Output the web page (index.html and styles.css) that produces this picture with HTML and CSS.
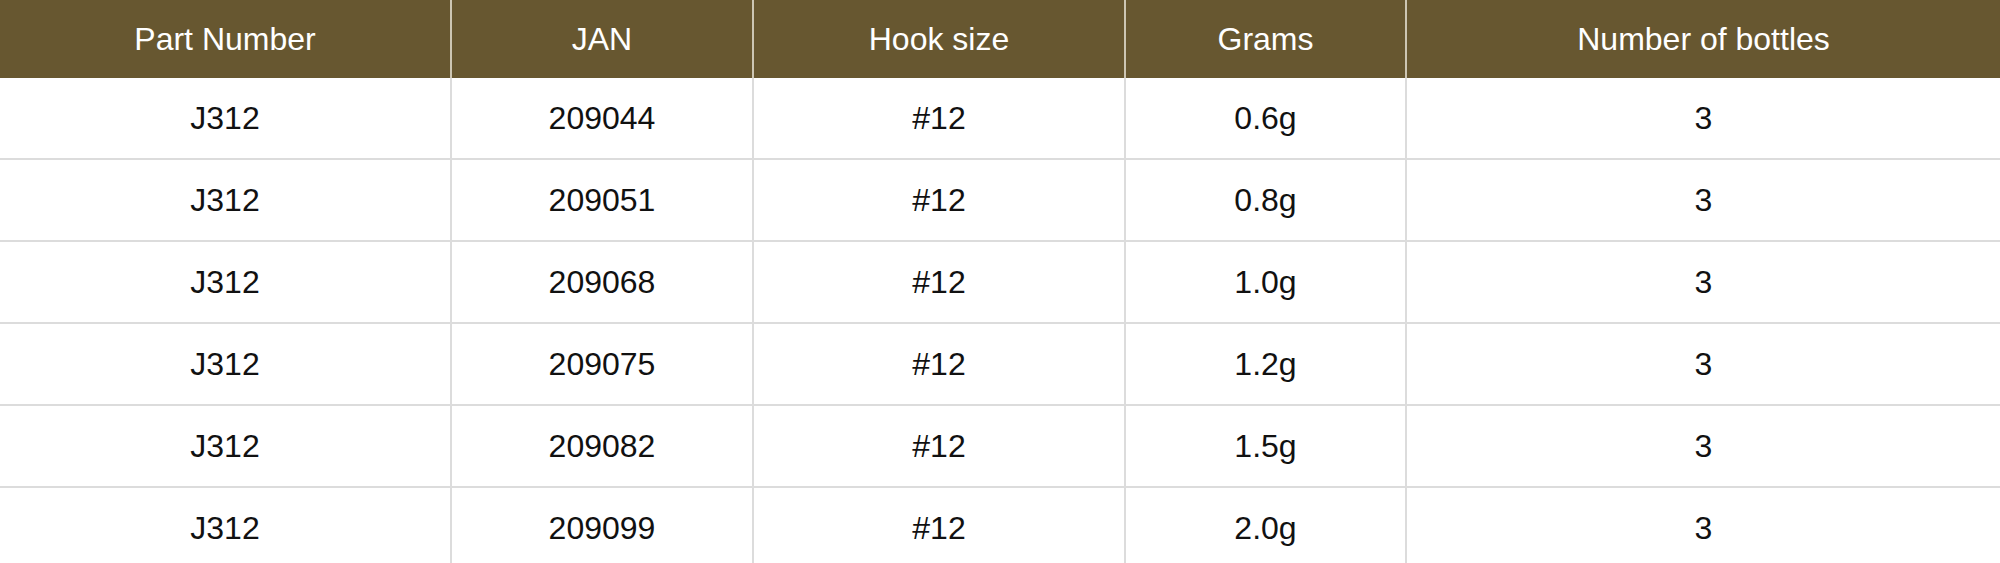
FILE: index.html
```html
<!DOCTYPE html>
<html>
<head>
<meta charset="utf-8">
<link rel="stylesheet" href="styles.css">
</head>
<body>
<table class="spec">
  <colgroup>
    <col class="c1"><col class="c2"><col class="c3"><col class="c4"><col class="c5">
  </colgroup>
  <thead>
    <tr><th>Part Number</th><th>JAN</th><th>Hook size</th><th>Grams</th><th>Number of bottles</th></tr>
  </thead>
  <tbody>
    <tr><td>J312</td><td>209044</td><td>#12</td><td>0.6g</td><td>3</td></tr>
    <tr><td>J312</td><td>209051</td><td>#12</td><td>0.8g</td><td>3</td></tr>
    <tr><td>J312</td><td>209068</td><td>#12</td><td>1.0g</td><td>3</td></tr>
    <tr><td>J312</td><td>209075</td><td>#12</td><td>1.2g</td><td>3</td></tr>
    <tr><td>J312</td><td>209082</td><td>#12</td><td>1.5g</td><td>3</td></tr>
    <tr><td>J312</td><td>209099</td><td>#12</td><td>2.0g</td><td>3</td></tr>
  </tbody>
</table>
</body>
</html>
```

FILE: styles.css
```css
html, body {
  margin: 0;
  padding: 0;
  background: #ffffff;
  overflow: hidden;
}
.spec {
  width: 2000px;
  border-collapse: collapse;
  table-layout: fixed;
  font-family: "Liberation Sans", Arial, sans-serif;
  font-size: 32px;
}
.c1 { width: 451px; }
.c2 { width: 302px; }
.c3 { width: 372px; }
.c4 { width: 281px; }
.c5 { width: 594px; }
.spec th {
  height: 78px;
  padding: 0;
  background: #675730;
  color: #ffffff;
  font-weight: normal;
  text-align: center;
  vertical-align: middle;
  border-left: 2px solid #cdc6b3;
}
.spec td {
  height: 80px;
  padding: 0;
  color: #111111;
  text-align: center;
  vertical-align: middle;
  border-left: 2px solid #dcdcdc;
  border-bottom: 2px solid #dcdcdc;
}
.spec th:first-child,
.spec td:first-child {
  border-left: none;
}
```
